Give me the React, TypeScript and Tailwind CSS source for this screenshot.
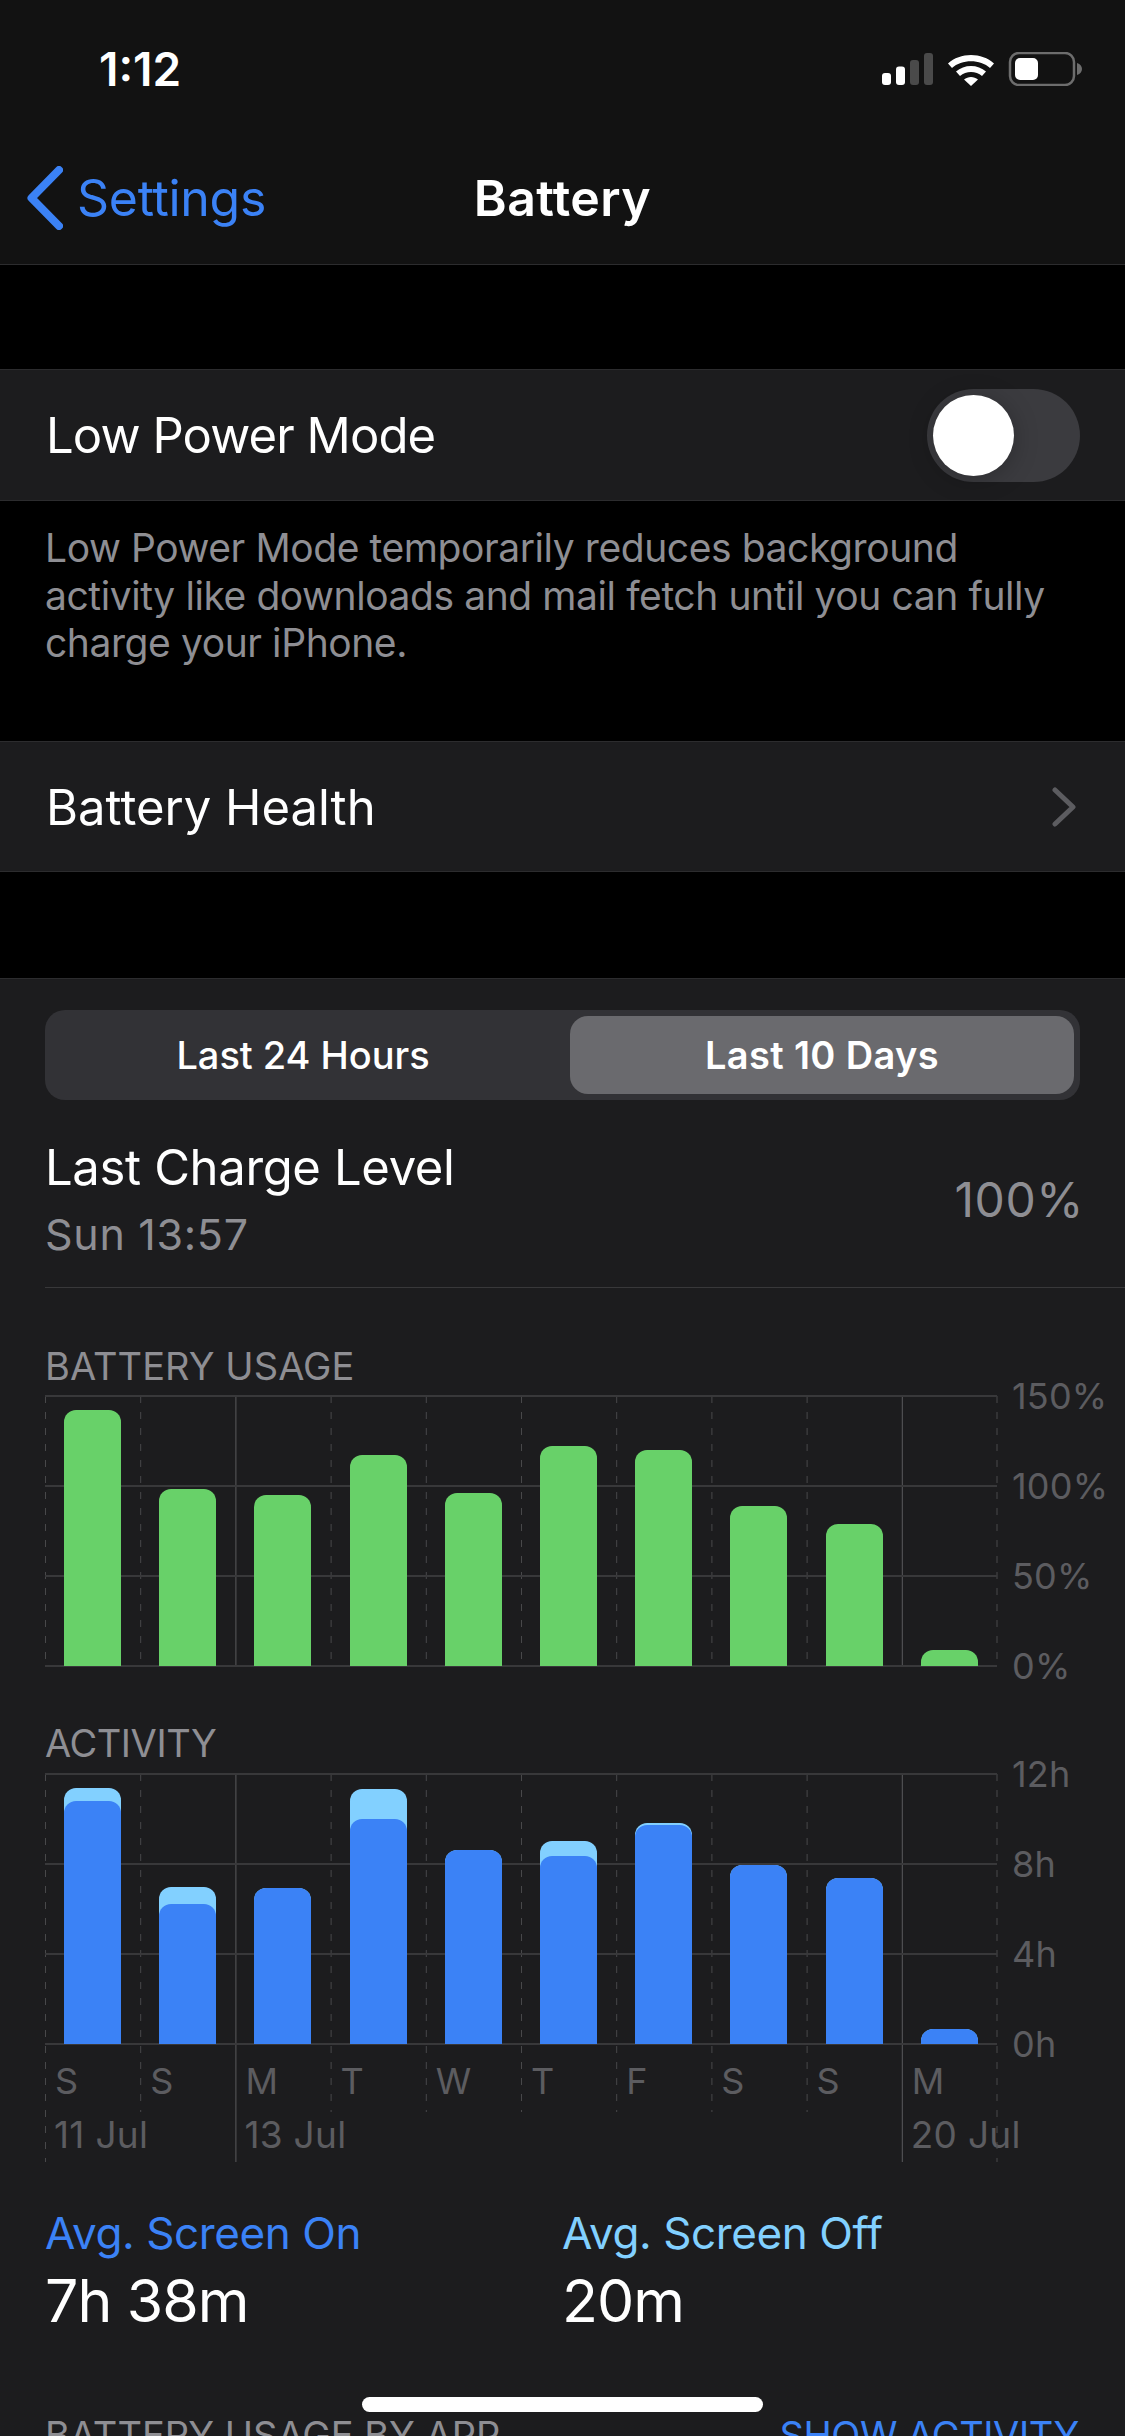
import React from 'react';

const COLS = [0, 95.2, 190.4, 285.6, 380.8, 476, 571.2, 666.4, 761.6, 856.8, 951.5];
const SOLID = [2, 9];

const usage = [256, 177, 171, 211, 173, 220, 216, 160, 142, 16];
const activity = [
  { on: 243, off: 13 },
  { on: 140, off: 17 },
  { on: 156, off: 0 },
  { on: 225, off: 30 },
  { on: 194, off: 0 },
  { on: 188, off: 15 },
  { on: 219, off: 2 },
  { on: 179, off: 0 },
  { on: 166, off: 0 },
  { on: 15, off: 0 },
];
const days = ['S', 'S', 'M', 'T', 'W', 'T', 'F', 'S', 'S', 'M'];

function StatusIcons() {
  return (
    <svg width="200" height="34" viewBox="0 0 200 34" fill="none">
      <rect x="0" y="21" width="9" height="12" rx="3" fill="#fff" />
      <rect x="14" y="14.5" width="9" height="18.5" rx="3" fill="#fff" />
      <rect x="28" y="8" width="9" height="25" rx="3" fill="#4a4a4a" />
      <rect x="42" y="1" width="9" height="32" rx="3" fill="#4a4a4a" />
      <path d="M66 11.5C78 0 100 0 112 11.5L108 16C98.5 7 79.5 7 70 16Z" fill="#fff" />
      <path d="M74 19.5C82 12 96 12 104 19.5L100 24C94 18.5 84 18.5 78 24Z" fill="#fff" />
      <path d="M82 27.5C86 24 92 24 96 27.5L89 34Z" fill="#fff" />
      <rect x="128" y="1" width="64" height="32" rx="9" stroke="#6d6d6d" strokeWidth="2.5" />
      <rect x="133" y="6" width="23" height="22" rx="5" fill="#fff" />
      <path d="M195 11C198.5 12 200 14.5 200 17C200 19.5 198.5 22 195 23Z" fill="#6d6d6d" />
    </svg>
  );
}

function Grid({ dayTail = 0, dateTail = 0 }: { dayTail?: number; dateTail?: number }) {
  return (
    <svg className="absolute left-0 top-0 overflow-visible" width="952" height="270" fill="none">
      {COLS.map((x, i) => {
        const solid = SOLID.includes(i);
        const edge = i === 0 || i === 10;
        const end = 270 + (solid || edge ? dateTail : dayTail);
        return (
          <line
            key={x}
            x1={x + 0.5}
            x2={x + 0.5}
            y1="0"
            y2={end}
            stroke={solid ? '#5a5a5d' : '#48484a'}
            strokeWidth="1"
            strokeDasharray={solid ? undefined : '7 9'}
          />
        );
      })}
      {[0, 90, 180, 270].map((y) => (
        <line key={y} x1="0" x2="952" y1={y} y2={y} stroke="#38383a" strokeWidth="2" />
      ))}
    </svg>
  );
}

function AxisLabels({ labels }: { labels: string[] }) {
  return (
    <div className="h-[270px] ml-[15px]">
      <div className="flex flex-col gap-[54px] -mt-[18px] text-[36px] leading-[36px] text-[#5c5c60] tracking-[0.2px]">
        {labels.map((l) => (
          <span key={l}>{l}</span>
        ))}
      </div>
    </div>
  );
}

export default function App() {
  return (
    <div className="relative w-[1125px] h-[2436px] overflow-hidden bg-black flex flex-col font-[Inter,'Liberation_Sans',sans-serif] text-white">
      <header className="h-[265px] shrink-0 bg-[#121212] border-b border-[#2c2c2e]">
        <div className="flex items-center justify-between h-[34px] mt-[52px] pl-[99px] pr-[43px]">
          <span className="text-[46px] leading-[34px] font-semibold">1:12</span>
          <StatusIcons />
        </div>
        <div className="relative h-[80px] mt-[72px] flex items-center pl-[27px]">
          <svg width="36" height="64" viewBox="0 0 36 64" fill="none">
            <path d="M32 4L4.5 32L32 60" stroke="#3b82f6" strokeWidth="8" strokeLinecap="round" strokeLinejoin="round" />
          </svg>
          <span className="ml-[14px] text-[50px] leading-[60px] text-[#3b82f6] tracking-[-0.3px]">Settings</span>
          <span className="absolute left-0 right-0 text-center text-[50px] leading-[60px] font-semibold tracking-[0.4px]">Battery</span>
        </div>
      </header>
      <div className="h-[104px] shrink-0" />
      <div className="h-[132px] shrink-0 bg-[#1c1c1e] border-y border-[#2c2c2e] pl-[46px] pr-[45px] flex items-center justify-between">
        <span className="text-[49px] leading-[60px] tracking-[-0.9px] mt-[2px]">Low Power Mode</span>
        <div className="relative w-[153px] h-[93px] rounded-full bg-[#3b3b3f]">
          <div className="absolute left-[6px] top-[6px] w-[81px] h-[81px] rounded-full bg-white shadow-[0_3px_24px_rgba(0,0,0,0.25)]" />
        </div>
      </div>
      <p className="h-[240px] shrink-0 pl-[45px] pr-[40px] pt-[23px] text-[39px] leading-[47.5px] text-[#8e8e93] tracking-[-0.42px]">
        Low Power Mode temporarily reduces background activity like downloads and mail fetch until you can fully charge your iPhone.
      </p>
      <div className="h-[131px] shrink-0 bg-[#1c1c1e] border-y border-[#2c2c2e] pl-[46px] pr-[48px] flex items-center justify-between">
        <span className="text-[49px] leading-[60px] mt-[2px]">Battery Health</span>
        <svg width="26" height="40" viewBox="0 0 26 40" fill="none">
          <path d="M4 3L22 20L4 37" stroke="#5c5c60" strokeWidth="5" strokeLinecap="round" strokeLinejoin="round" />
        </svg>
      </div>
      <div className="h-[106px] shrink-0" />
      <section className="flex-1 min-h-0 bg-[#1c1c1e] border-t border-[#2c2c2e] pl-[45px]">
        <div className="mt-[31px] w-[1035px] h-[90px] rounded-[20px] bg-[#323236] flex items-center justify-between px-[6px] text-[38px]">
          <div className="w-[504px] text-center font-medium tracking-[-0.05px]">Last 24 Hours</div>
          <div className="w-[504px] h-[78px] rounded-[18px] bg-[#6a6a6e] flex items-center justify-center font-semibold tracking-[0.35px]">Last 10 Days</div>
        </div>

        <div className="mt-[38px] flex items-center justify-between pr-[41px]">
          <div>
            <div className="text-[49px] leading-[60px] tracking-[-0.35px]">Last Charge Level</div>
            <div className="-mt-[1px] text-[43px] leading-[74px] text-[#8e8e93] tracking-[0.7px]">Sun 13:57</div>
          </div>
          <div className="pb-[10px] text-[48px] leading-[60px] text-[#8e8e93] tracking-[0.6px]">100%</div>
        </div>
        <div className="mt-[16px] h-px bg-[#38383a]" />

        <div className="mt-[56px] mb-[8px] text-[38px] leading-[44px] text-[#8e8e93] tracking-[0.07px]">BATTERY USAGE</div>
        <div className="flex">
          <div className="relative w-[952px] h-[270px]">
            <Grid />
            <div className="absolute left-0 bottom-0 flex items-end">
              {usage.map((h, i) => (
                <div key={i} className="w-[95.2px] flex justify-center">
                  <div className="w-[57px] rounded-t-[12px] bg-[#68d169]" style={{ height: h }} />
                </div>
              ))}
            </div>
          </div>
          <AxisLabels labels={['150%', '100%', '50%', '0%']} />
        </div>

        <div className="mt-[55px] mb-[9px] text-[38px] leading-[44px] text-[#8e8e93] tracking-[-0.45px]">ACTIVITY</div>
        <div className="flex">
          <div className="relative w-[952px] h-[270px]">
            <Grid dayTail={68} dateTail={118} />
            <div className="absolute left-0 bottom-0 flex items-end">
              {activity.map((a, i) => (
                <div key={i} className="w-[95.2px] flex justify-center">
                  <div className="w-[57px] rounded-t-[12px] bg-[#82d0ff] flex flex-col justify-end" style={{ height: a.on + a.off }}>
                    <div className="rounded-t-[12px] bg-[#3b82f6]" style={{ height: a.on }} />
                  </div>
                </div>
              ))}
            </div>
          </div>
          <AxisLabels labels={['12h', '8h', '4h', '0h']} />
        </div>

        <div className="mt-[19px] grid grid-cols-[repeat(10,95.2px)] text-[36px] leading-[36px] text-[#5c5c60]">
          {days.map((d, i) => (
            <span key={i} className="pl-[10px]">{d}</span>
          ))}
        </div>
        <div className="mt-[18px] grid grid-cols-[repeat(10,95.2px)] text-[37px] leading-[36px] text-[#5c5c60] tracking-[0.3px] whitespace-nowrap">
          <span className="col-start-1 pl-[9px]">11 Jul</span>
          <span className="col-start-3 pl-[9px]">13 Jul</span>
          <span className="col-start-10 pl-[9px]">20 Jul</span>
        </div>

        <div className="mt-[55px] grid grid-cols-[517px_1fr]">
          <div>
            <div className="text-[44px] leading-[50px] text-[#3b82f6] tracking-[-0.4px]">Avg. Screen On</div>
            <div className="mt-[8px] text-[59px] leading-[70px] tracking-[-1px]">7h 38m</div>
          </div>
          <div>
            <div className="text-[44px] leading-[50px] text-[#82d0ff] tracking-[-0.4px]">Avg. Screen Off</div>
            <div className="mt-[8px] text-[59px] leading-[70px] tracking-[-1px]">20m</div>
          </div>
        </div>

        <div className="mt-[77px] flex justify-between pr-[46px] text-[38px] leading-[44px] tracking-[0px]">
          <span className="text-[#8e8e93]">BATTERY USAGE BY APP</span>
          <span className="text-[#3b82f6] tracking-[-0.4px]">SHOW ACTIVITY</span>
        </div>
      </section>
      <div className="absolute left-[362px] top-[2397px] w-[401px] h-[15px] rounded-full bg-white" />
    </div>
  );
}
